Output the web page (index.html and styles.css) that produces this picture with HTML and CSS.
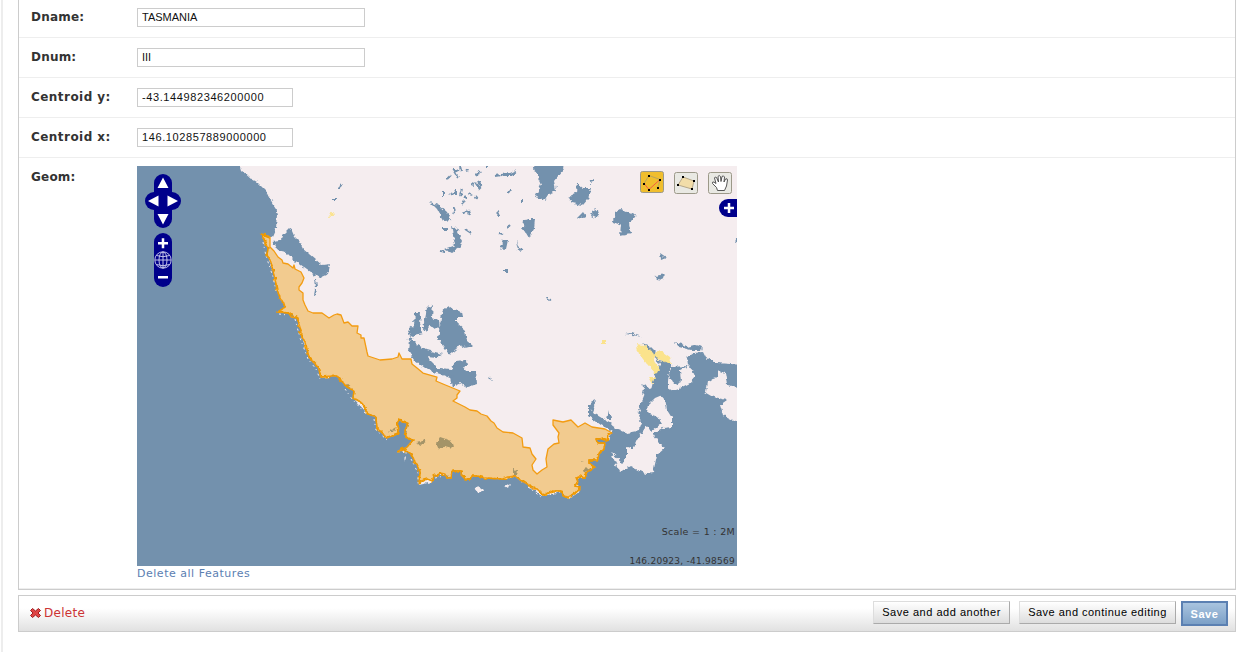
FILE: index.html
```
<!DOCTYPE html>
<html lang="en">
<head>
<meta charset="utf-8">
<title>Change district</title>
<link rel="stylesheet" href="styles.css">
</head>
<body>
<main class="content">
  <form class="module">
    <div class="row"><label class="name">Dname:</label><input class="field wide" value="TASMANIA"></div>
    <div class="row"><label class="name">Dnum:</label><input class="field wide numeral" value="III"></div>
    <div class="row"><label class="name">Centroid y:</label><input class="field number" value="-43.144982346200000"></div>
    <div class="row"><label class="name">Centroid x:</label><input class="field number" value="146.102857889000000"></div>
    <div class="row geom"><label class="name">Geom:</label>
      <div>
        <div class="map">
<svg class="layer" width="600" height="400" viewBox="137 166 600 400">
<defs>
<filter id="rough" filterUnits="userSpaceOnUse" x="130" y="160" width="620" height="420"><feTurbulence type="fractalNoise" baseFrequency=".25" numOctaves="2" seed="4" result="n"/><feDisplacementMap in="SourceGraphic" in2="n" scale="5" xChannelSelector="R" yChannelSelector="G"/></filter>
</defs>
<g filter="url(#rough)">
<path class="land" d="M238 160L241 170L250 178L257 182L266 191L274 205L277 214L276 228L272 237L262 234L265 243L268 248L267 255L274 275L277 290L281 300L285 307L278 312L289 313L297 318L301 335L309 357L318 367L321 378L337 376L354 391L353 398L368 414L376 416L377 428L387 438L398 434L397 425L399 419L408 423L406 437L413 440L407 447L398 451L410 453L420 472L419 485L432 482L434 476L445 474L451 478L452 471L461 471L465 479L478 476L485 478L503 479L515 477L527 485L542 496L562 492L568 498L580 491L576 478L585 478L587 472L595 467L589 463V460L598 460L599 453L604 449L605 443L598 443L596 440L602 438L607 441L612 433L612 427L620 430L627 433L638 431L641 423L639 416L642 407L648 398L643 393L645 384L652 392L655 388L654 378L660 372L660 362L656 360L668 361L671 365L667 375L668 387L673 390L682 387L690 383L695 377L690 367L688 365L687 357L693 353L703 352L706 358L717 363L745 365V160Z"/>
<path class="land" d="M745 388L727 385L725 373L717 370L717 378L708 381L706 393L713 397L727 400L720 405L723 415L745 427ZM658 392L665 400L667 410L672 418V427L663 428L653 434L660 445L665 448L657 455L653 473L647 474L638 470L630 466L620 472L615 462L611 452L623 463L627 458V447L633 449L637 440L647 425L651 432L662 423L658 417L647 413L648 403ZM474 488L480 487L484 490L478 493ZM505 486L510 483L508 488ZM404 458L406 456L405 463Z"/>
<path class="water" d="M671 367L688 366L680 370L681 382L674 385L669 375ZM589 404L596 400L592 412L605 420L614 425L612 431L601 425L589 416ZM609 411L611 419L607 419ZM661 364L669 370L667 393L655 398L647 406L642 417L638 410L646 391L642 384L651 390L655 374ZM675 342L682 344L687 347L695 345L703 347L702 350L691 350L679 347ZM625 334L631 333L642 337L633 335ZM642 343L650 346L658 354L660 364L652 353Z"/>
<path class="water" d="M272 241L281 240L283 235L289 229L292 230L295 237L299 241L303 249L315 259L322 265L330 264L328 274L319 278L307 270L296 262L286 252L277 250Z"/>
<path class="water" d="M430 202L439 205L447 212L451 220L444 221L438 210ZM451 226L457 229L463 241L460 248L452 253L444 249L455 245ZM535 160L564 160L563 170L554 181L556 191L548 194L546 200L535 197L541 184L534 169ZM577 183L583 188L591 188L588 199L583 205L573 203L568 197L576 193ZM524 220L535 219L534 229L529 238L523 228ZM615 212L620 209L636 216L629 223L631 234L620 236L621 225L613 222ZM577 218L583 212L586 216ZM590 215L595 209L600 213L596 218ZM501 174L510 173L517 170L512 176L503 176ZM503 240L508 240L506 249L500 248ZM516 240L519 248L525 250L518 251ZM498 209L501 216H497ZM655 276L665 274L663 280L657 279ZM660 253L666 257L661 259ZM524 222L528 219L534 219Z"/>
<path class="water" d="M408 330L414 325L415 312L421 312L420 324L422 333L414 335L410 337ZM423 328L427 308L433 304L432 318L439 320L440 329L434 328L430 325L426 332ZM443 310L449 306L454 310L462 312L463 317L456 317L456 322L465 330L467 341L473 346L465 348L459 345L454 354L448 353L438 339L441 319ZM409 341L414 341L418 345L427 350L443 354L437 358L427 357L439 369L451 370L455 362L467 361L468 365L463 367L466 371L476 371L477 384L468 387L461 383L452 387L450 378L440 374L428 370L415 361L408 350Z"/>
<path class="specks" d="M447 179l4-4M455 172l4-2M460 166l1 4M466 171l2-1M450 195l5-3M462 189l-2 7M468 193l4 2M475 182l4 6l2-2l-3-5M443 191v6M479 170l1 3M455 208l-2 6M467 210l-3 4M462 204l2-4M470 215l-2-5M508 193l2-3M520 200h3M510 225l-3 3M499 233l5 1M504 270h3v2M465 229l6 4M495 176l6-1M487 163v4M456 190v4M440 251l5 1M315 279l1 8M316 290l-1 5M332 199h5M342 184l-3 4M546 296l1 3l4 1M489 377l2 2M738 237l-2 5M465 196l3 2M453 169l5 8M476 176l2-3M445 216l3 3M590 182l3-1M475 198l2-2M471 184l3 1M443 229l5 0M408 340l5-2M446 375l10 2"/>
<path class="town" d="M636 344L644 345L650 350L657 354L653 360L660 369L657 375L647 364L639 354ZM656 353L660 350L670 357L672 364L665 362L656 358ZM648 377L655 377L652 384ZM602 340h5v4h-5ZM329 214l4-3l1 4l-4 2Z"/>
<path class="water" d="M436 443L440 437L446 439L452 441L454 448L445 446L439 450ZM416 443L422 442L424 439L427 443L420 445ZM513 469L517 470L516 476L513 476ZM583 470L590 467L588 472L584 473ZM388 432L396 427L394 432ZM580 460l4 1l-2 1Z"/>
</g>
<path class="district" d="M262 234L270 237L270 247L274 251L278 257L282 260L283 263L288 264L293 268L294 265L295 269L301 272L304 278L302 283L299 287L299 290L303 293L303 300L305 305L308 311L313 313L322 313L329 318L334 315L337 314L341 315L344 323L348 322L352 326L358 326L357 333L361 335L361 338L364 338L367 352L368 356L380 360L392 359L398 357L399 353L402 359L411 359L412 364L417 368L423 373L437 377L436 381L443 384L460 391L457 395L457 398L453 401L465 407L470 410L477 411L481 414L487 416L491 421L494 423L497 428L503 432L513 433L522 438L523 447L530 448L532 454L536 459L532 465L533 470L537 474L542 470L547 467L546 459L548 449L554 444L559 443L558 437L559 433L553 425L553 420L563 422L571 420L578 427L585 423L592 427L605 429L612 433L608 435L607 441L602 438L596 440L598 443L605 443L604 449L599 453L598 460L589 460L589 463L595 467L587 472L585 478L580 476L576 478L578 481L575 486L580 487L580 490L575 493L568 497L563 496L562 491L553 491L543 495L537 489L533 489L527 484L520 480L515 476L507 477L503 479L485 478L478 476L472 476L470 479L465 479L461 475L461 471L452 471L451 478L447 478L445 474L440 473L438 476L434 476L432 481L427 479L420 481L419 484L420 472L417 465L413 458L410 453L404 450L398 451L407 447L413 440L406 437L405 430L408 423L402 422L399 419L397 425L399 428L398 434L387 438L382 433L377 428L376 417L368 414L362 403L353 398L354 391L347 387L339 378L337 376L332 376L321 377L318 367L313 362L309 357L305 342L301 335L301 330L297 318L291 317L289 313L278 312L285 307L284 303L281 300L277 290L277 287L274 275L271 262L267 255L268 248L265 243Z"/>
<path class="coast" filter="url(#rough)" d="M611 433L608 435L607 441L602 438L596 440L598 443L605 443L604 449L599 453L598 460L589 460V463L595 467L587 472L585 478L580 476L576 478L578 481L575 486L580 487L575 493L568 497L563 496L562 491L553 491L543 495L537 489L527 484L515 476L503 479L485 478L478 476L472 476L470 479H465L461 471H452L451 478H447L440 473L434 476L432 481L427 479L420 481L419 484L420 472L410 453L404 450L398 451L407 447L413 440L406 437L405 430L408 423L399 419L397 425L398 434L387 438L377 428L376 417L368 414L362 403L353 398L354 391L347 387L337 376L321 377L318 367L309 357L305 342L301 335L297 318L289 313L278 312L285 307L281 300L277 290L271 262L267 255L268 248L262 234L270 237"/>
<path class="surf" d="M263 242L266 256L273 277L276 291M279 314L287 315M295 319L300 338L308 359L316 369L320 379M345 389L352 399L366 414M374 419L376 430L387 440M411 459L418 473L418 486M435 478L444 476M528 487L541 497M569 498L579 492"/>
</svg>
<svg class="nav" width="36" height="114" viewBox="145 173 36 114">
<g fill="#00008b"><rect x="154" y="174" width="18" height="54" rx="9"/><rect x="145" y="192" width="36" height="18" rx="9"/><rect x="154" y="233" width="18" height="54" rx="9"/></g>
<path fill="#fff" d="M163 177.500L168.500 188H157.500ZM163 224.500L168.500 214H157.500ZM148 201L158.500 195.500V206.500ZM178 201L167.500 195.500V206.500Z"/>
<path stroke="#fff" stroke-width="2.500" d="M158 243.300H168M163 238.300V248.300M158 277.300H168"/>
<g fill="none" stroke="#d5d5f2" stroke-width=".9"><circle cx="163" cy="260" r="8.200"/><ellipse cx="163" cy="260" rx="4" ry="8"/><path d="M155 260H171M163 252V268M156.500 255.500Q163 258 169.500 255.500M156.500 264.500Q163 267 169.500 264.500"/></g>
</svg>
<div class="tools">
<svg width="24" height="22" viewBox="0 0 24 22"><rect class="tool active" x=".5" y=".5" width="23" height="21" rx="2"/><path fill="none" stroke="#b9a45c" d="M4 12.500L9 4.500L20 8.500L18 16.500"/><path fill="none" stroke="#f45c46" d="M4 12.500L9 18.500L20 8.500"/><path d="M3 12h2v2H3zM8 4h2v2H8zM19 8h2v2h-2zM17 16h2v2h-2zM8 18h2v2H8z"/></svg>
<svg class="lower" width="24" height="22" viewBox="0 0 24 22"><rect class="tool" x=".5" y=".5" width="23" height="21" rx="2"/><path fill="#f2dda9" stroke="#b7a88a" d="M9 5L20 9L18 17L4 13Z"/><path d="M8 4h2v2H8zM19 8h2v2h-2zM17 16h2v2h-2zM3 12h2v2H3z"/></svg>
<svg class="lower" width="24" height="22" viewBox="0 0 24 22"><rect class="tool" x=".5" y=".5" width="23" height="21" rx="2"/><path fill="#fff" stroke="#444" stroke-width=".9" stroke-linejoin="round" d="M9.500 18.500L8.500 15.500L4.500 11.500Q4 9.500 6 10L8 11.500L6.500 6Q7 4.300 8.500 5.500L10.500 10L10 4.500Q11 2.500 12.500 4.500L13 9.500L14 4.500Q15.500 3 16.500 5L16 10L17.500 7Q19.500 6 19.500 8L18.500 14L16.500 18.500Z"/></svg>
</div>
<svg class="expand" width="18" height="18" viewBox="0 0 18 18"><path fill="#00008b" d="M18 0H9A9 9 0 0 0 9 18H18Z"/><path stroke="#fff" stroke-width="2.500" d="M5 9H15M10 4V14"/></svg>
<div class="scale">Scale = 1 : 2M</div>
<div class="position">146.20923, -41.98569</div>
        </div>
        <a class="clear">Delete all Features</a>
      </div>
    </div>
  </form>
  <div class="submit-row">
    <a class="delete"><svg width="11" height="10" viewBox="0 0 11 10"><path fill="#df4545" stroke="#a01c20" d="M2.500 .5L5.500 3L8.500 .5L10.500 2.500L8 5L10.500 7.500L8.500 9.500L5.500 7L2.500 9.500L.5 7.500L3 5L.5 2.500Z"/></svg>Delete</a>
    <button class="button another">Save and add another</button>
    <button class="button continue">Save and continue editing</button>
    <button class="button default">Save</button>
  </div>
</main>
</body>
</html>
```
FILE: styles.css
```
* { box-sizing: border-box; }
body { margin: 0; height: 652px; overflow: hidden; background: #fff; color: #333; font-family: "DejaVu Sans", sans-serif; }
.content { margin-left: 1px; height: 652px; border-left: 2px solid #ededed; padding: 0 11px 0 15px; }
.module { height: 590px; border: 1px solid #ccc; border-top: 0; border-bottom-width: 2px; border-bottom-color: #ccc; }
.row { display: flex; height: 40px; padding: 10px 12px 0; border-bottom: 1px solid #eee; }
.row:first-child { height: 38px; padding-top: 8px; }
.geom { height: 431px; padding-top: 8px; }
.name { width: 106px; padding-top: 1px; font-size: 12px; font-weight: bold; line-height: 16px; letter-spacing: .45px; }
.row:nth-child(-n+2) .name { letter-spacing: .2px; }
.geom .name { padding-top: 3px; letter-spacing: .2px; }
.field { height: 19px; border: 1px solid #ccc; border-radius: 0; padding: 0 4px 2px; background: #fff; color: #111; font: 11px "Liberation Sans", Arial, sans-serif; }
.wide { width: 228px; }
.numeral { letter-spacing: 0; }
.number { width: 156px; letter-spacing: .6px; }
.map { position: relative; width: 600px; height: 400px; overflow: hidden; background: #7391ad; }
.layer { display: block; }
.land { fill: #f5edef; }
.water { fill: #7391ad; }
.specks { fill: none; stroke: #7391ad; stroke-width: 2; }
.town { fill: #fbe38c; }
.district { fill: #e90; fill-opacity: .4; stroke: #f39c12; stroke-width: 1.3; stroke-linejoin: round; }
.coast { fill: none; stroke: #e90; stroke-width: 1.5; }
.surf { fill: none; stroke: #f5edef; stroke-width: 1; stroke-dasharray: 2 3 1 4; }
.nav { position: absolute; left: 8px; top: 7px; }
.tools { position: absolute; right: 5px; top: 5px; display: flex; gap: 10px; }
.lower { margin-top: 1px; }
.tool { fill: #e9e9e3; stroke: #9c9989; stroke-width: 1; }
.active { fill: #f0be2d; }
.expand { position: absolute; right: 0; top: 33px; }
.scale { position: absolute; right: 2px; top: 359px; font-size: 9.5px; line-height: 14px; letter-spacing: .3px; }
.position { position: absolute; right: 2px; top: 389px; font-size: 9px; line-height: 12px; letter-spacing: .25px; }
.clear { display: block; color: #5b80b2; font-size: 11px; line-height: 15px; letter-spacing: .52px; }
.submit-row { display: flex; height: 37px; margin-top: 5px; padding: 5px 7px; border: 1px solid #ccc; background: linear-gradient(#fff 35%, #e1e1e1); }
.delete { display: flex; align-items: center; gap: 3px; height: 23px; margin-right: auto; padding-left: 4px; color: #c33; font-size: 12px; letter-spacing: .3px; }
.button { height: 23px; border: 1px solid; border-color: #ddd #aaa #aaa #ddd; padding: 0 0 2px; background: linear-gradient(#fff, #ddd); color: #000; font: 11px "Liberation Sans", Arial, sans-serif; letter-spacing: .52px; }
.another { width: 137px; margin-right: 9px; }
.continue { width: 157px; margin-right: 5px; letter-spacing: .48px; }
.default { width: 47px; height: 25px; border: 2px solid #5b80b2; padding: 0; background: linear-gradient(#a9c4df, #7ca0c7); color: #fff; font-weight: bold; }
```
